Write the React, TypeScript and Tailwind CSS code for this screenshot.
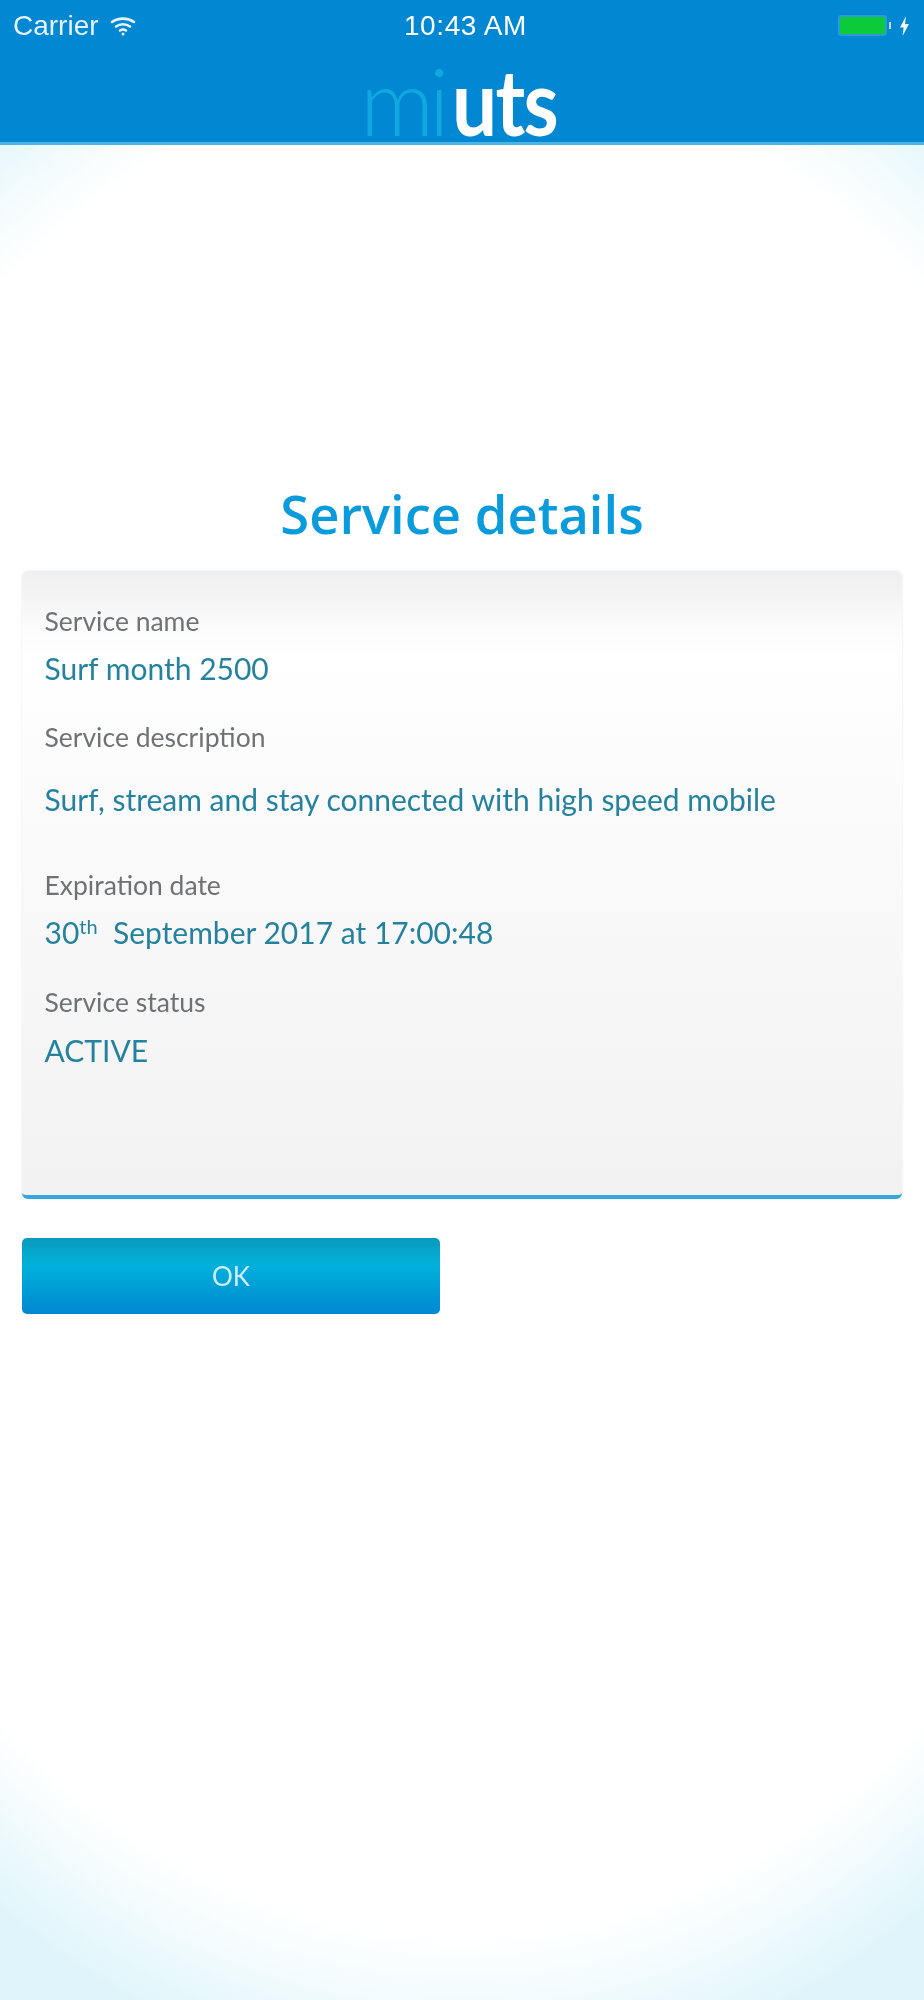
const rows = [
  { label: "Service name", value: "Surf month 2500", top: "mt-[34px]", gap: "mt-[13px]" },
  { label: "Service description", value: "Surf, stream and stay connected with high speed mobile", top: "mt-[35px]", gap: "mt-[28px]" },
];

const StatusBar = () => (
  <div className="flex h-[50px] items-center justify-between px-[13px] pt-[1px] text-white font-['Liberation_Sans',sans-serif] text-[28px] blur-[0.6px]">
    <div className="flex w-[200px] items-center gap-[11px]">
      <span className="opacity-90">Carrier</span>
      <svg width="26" height="20" viewBox="0 0 26 20" fill="none" stroke="#e8f4fb" strokeLinecap="round" strokeWidth="2.6">
        <path d="M2 6C8.500 1.500 17.500 1.500 24 6" />
        <path d="M6 10.500C10 7.500 16 7.500 20 10.500" />
        <path d="M10 14.500C11.800 13.300 14.200 13.300 16 14.500" />
        <circle cx="13" cy="18" r="1.500" fill="#e8f4fb" stroke="none" />
      </svg>
    </div>
    <span className="ml-[7px] tracking-[0.6px]">10:43 AM</span>
    <div className="flex w-[200px] items-center justify-end gap-[8px] pr-[1px]">
      <div className="flex items-center">
        <div className="h-[21px] w-[49px] rounded-[3px] border-[2px] border-[#2a9ad8] bg-[#0ccb3a]" />
        <div className="ml-[2px] h-[7px] w-[2px] bg-[#bfe0f3]" />
      </div>
      <svg width="11" height="20" viewBox="0 0 11 20" fill="#f2f9fd">
        <path d="M7 0 1 11.500h3.600L3.600 20 10 8H6z" />
      </svg>
    </div>
  </div>
);

const Field = ({ label, value, className }: { label: string; value: React.ReactNode; className?: string }) => (
  <div className={className}>
    <div className="text-[26.5px] leading-[32px] text-[#6f7274]">{label}</div>
    {value}
  </div>
);

export default function App() {
  return (
    <div className="flex h-[2000px] w-[924px] flex-col overflow-hidden bg-[radial-gradient(ellipse_811px_1045px_at_462px_1005px,#ffffff_89%,#f5fcfd_94%,#dff5fb_104%)] font-['Lato',sans-serif]">
      <header className="h-[145px] shrink-0 border-b-[3px] border-[#4db4e6] bg-[#0287d2]">
        <StatusBar />
        <div className="flex h-[95px] items-end justify-center">
          <span className="mr-[13px] flex w-[191px] text-[92px] leading-[88px] blur-[0.6px]">
            <span className="font-light tracking-[-5px] text-[#0fa9df]">mi</span>
            <span className="ml-[7px] inline-block origin-left scale-x-[0.87] font-bold tracking-[-2px] text-white">uts</span>
          </span>
        </div>
      </header>

      <main className="flex flex-col px-[22px] pt-[325px]">
        <h1 className="text-center font-['Open_Sans',sans-serif] text-[52.5px] leading-[88px] font-semibold text-[#0a9bdc] blur-[0.5px]">
          Service details
        </h1>

        <section className="mt-[13px] flex h-[628px] flex-col rounded-[6px] border-b-[4px] border-[#3ba5db] bg-[linear-gradient(180deg,#efefef_0%,#fcfcfc_10%,#ffffff_14%,#fbfbfb_35%,#f2f2f2_100%)] px-[22.5px] shadow-[0_0_2px_rgba(120,200,225,0.4)]">
          {rows.map((r) => (
            <Field
              key={r.label}
              label={r.label}
              className={`${r.top} blur-[0.5px]`}
              value={<div className={`${r.gap} text-[30px] leading-[36px] text-[#25829f]`}>{r.value}</div>}
            />
          ))}
          <Field
            label="Expiration date"
            className="mt-[52px] blur-[0.5px]"
            value={
              <div className="mt-[13px] text-[30px] leading-[36px] text-[#25829f]">
                30<sup className="text-[20px] leading-none">th</sup>&nbsp; September 2017 at 17:00:48
              </div>
            }
          />
          <Field
            label="Service status"
            className="mt-[36px] blur-[0.5px]"
            value={<div className="mt-[14px] text-[30px] leading-[36px] text-[#25829f]">ACTIVE</div>}
          />
        </section>

        <button className="mt-[39px] h-[76px] w-[418px] rounded-[5px] bg-[linear-gradient(180deg,#0a9abd_0%,#01b1da_35%,#0087d2_100%)] text-[26px] text-[#cdeefa]">
          <span className="blur-[0.5px]">OK</span>
        </button>
      </main>
    </div>
  );
}
